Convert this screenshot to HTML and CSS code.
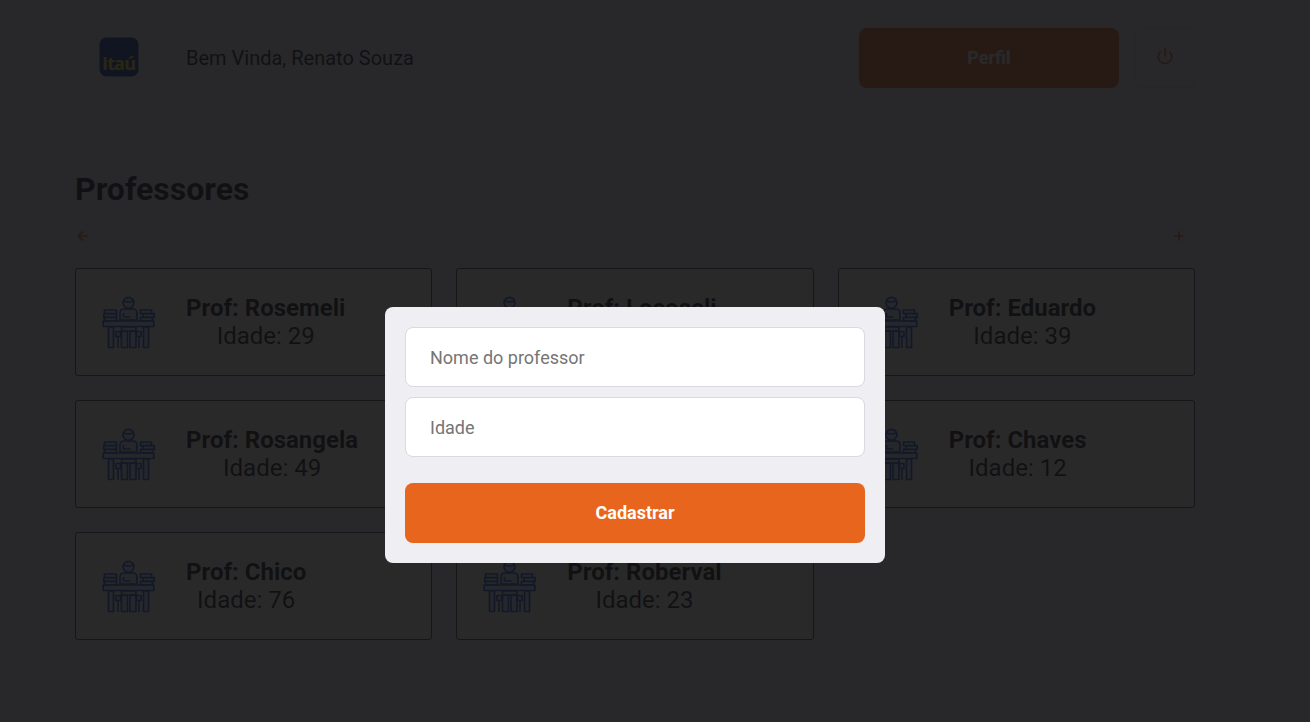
FILE: index.html
```html
<!DOCTYPE html>
<html lang="pt-BR">
<head>
<meta charset="utf-8">
<title>Professores</title>
<link rel="stylesheet" href="styles.css">
</head>
<body>
<svg class="sprite" aria-hidden="true">
  <symbol id="teacher" viewBox="0 0 54 54">
    <g fill="#9db8f5" fill-opacity=".3" stroke="#1c57e0" stroke-width="1.7" stroke-linejoin="round">
      <path d="M18 24V17q0-4 4-4h9q4 0 4 4v7z"/>
      <path d="M19.500 31h14.500v4H19.500z"/>
      <circle cx="26.500" cy="6.800" r="5.500"/>
      <path d="M21.500 5q5 2 10 0M21.500 17v4h7" fill="none"/>
      <path d="M2.500 14h12v3.700h-12zM1.800 17.700h12.700v3.700H1.800zM2.500 21.400h12V25h-12zM38.500 14h11v3.700h-11zM41 17.700h11.300v3.700H41zM38.500 21.400h12V25h-12z"/>
      <path d="M1.200 25h50.600v5.500H1.200z"/>
      <path d="M6.500 31h5v20.500h-5zM41.500 31h5v20.500h-5z"/>
      <path d="M14 35.500h4.500v5H14zM34.500 35.500H39v5h-4.500z"/>
      <path d="M19.500 51.500V37q0-2 3-2t3 2v14.500zM28 51.500V37q0-2 3-2t3 2v14.500z"/>
      <path d="M16 41v11M37 41v11" fill="none"/>
    </g>
  </symbol>
</svg>
<main class="page">
  <header class="header">
    <svg class="logo" viewBox="0 0 40 40"><rect x=".5" y=".5" width="39" height="39" rx="7" fill="#003a9c"/><text class="logo-text" x="20" y="32.500" text-anchor="middle" textLength="34">Itaú</text></svg>
    <span class="welcome">Bem Vinda, Renato Souza</span>
    <button class="button profile">Perfil</button>
    <button class="logout" aria-label="Sair"><svg width="18" height="18" viewBox="0 0 24 24" fill="none" stroke="#e8651d" stroke-width="2.200" stroke-linecap="round"><path d="M18.360 6.640a9 9 0 1 1-12.730 0M12 2v10"/></svg></button>
  </header>
  <h1 class="title">Professores</h1>
  <nav class="actions">
    <svg width="16" height="16" viewBox="0 0 24 24" fill="none" stroke="#e8651d" stroke-width="2.500"><path d="M20 12H5M12 19l-7-7 7-7"/></svg>
    <svg width="16" height="16" viewBox="0 0 24 24" fill="none" stroke="#e8651d" stroke-width="2.500"><path d="M12 5v14M5 12h14"/></svg>
  </nav>
  <ul class="cards">
    <li class="card"><svg class="avatar"><use href="#teacher"/></svg><div class="info"><strong>Prof: Rosemeli</strong><span>Idade: 29</span></div></li>
    <li class="card"><svg class="avatar"><use href="#teacher"/></svg><div class="info"><strong>Prof: Locoseli</strong><span>Idade: 35</span></div></li>
    <li class="card"><svg class="avatar"><use href="#teacher"/></svg><div class="info"><strong>Prof: Eduardo</strong><span>Idade: 39</span></div></li>
    <li class="card"><svg class="avatar"><use href="#teacher"/></svg><div class="info"><strong>Prof: Rosangela</strong><span>Idade: 49</span></div></li>
    <li class="card"></li>
    <li class="card"><svg class="avatar"><use href="#teacher"/></svg><div class="info"><strong>Prof: Chaves</strong><span>Idade: 12</span></div></li>
    <li class="card"><svg class="avatar"><use href="#teacher"/></svg><div class="info"><strong>Prof: Chico</strong><span>Idade: 76</span></div></li>
    <li class="card"><svg class="avatar"><use href="#teacher"/></svg><div class="info"><strong>Prof: Roberval</strong><span>Idade: 23</span></div></li>
  </ul>
</main>
<div class="overlay">
  <form class="modal">
    <input class="field" placeholder="Nome do professor">
    <input class="field" placeholder="Idade">
    <button class="button submit" type="button">Cadastrar</button>
  </form>
</div>
</body>
</html>
```
FILE: styles.css
```css
* { box-sizing: border-box; margin: 0; padding: 0; }
body { background: #f0f0f5; color: #13130a; font-family: Roboto, sans-serif; height: 722px; overflow: hidden; }
.sprite { display: none; }
.page { width: 1120px; margin-left: 75px; padding-top: 28px; }
.header { display: flex; align-items: center; height: 60px; }
.logo { width: 40px; height: 40px; margin: 0 0 2px 24px; }
.logo-text { font: 700 18px "Open Sans", sans-serif; fill: #ffe600; }
.welcome { margin-left: 47px; font-size: 20px; }
.button { height: 60px; padding-bottom: 2px; border: 0; border-radius: 8px; background: #e8651d; color: #fff; font: 700 18px Roboto, sans-serif; }
.profile { width: 260px; margin-left: auto; }
.logout { display: flex; align-items: center; justify-content: center; width: 60px; height: 60px; margin-left: 16px; padding-bottom: 4px; border: 1px solid #dcdce6; border-radius: 4px; background: transparent; }
.title { margin-top: 82px; font-size: 32px; line-height: 38px; }
.actions { display: flex; justify-content: space-between; height: 16px; margin-top: 20px; padding-right: 8px; }
.cards { display: grid; grid-template-columns: repeat(3, 1fr); gap: 24px; margin-top: 24px; list-style: none; }
.card { display: flex; align-items: center; height: 108px; padding-left: 26px; border: 1px solid #444; border-radius: 3px; background: #fffff0; }
.avatar { width: 54px; height: 54px; margin-top: 2px; }
.info { display: flex; flex-direction: column; align-items: center; margin-left: 30px; font-size: 24px; line-height: 28px; }
.overlay { position: fixed; inset: 0; background: rgba(18, 18, 20, .9); }
.modal { position: absolute; left: 385px; top: 307px; display: flex; flex-direction: column; gap: 10px; width: 500px; height: 256px; padding: 20px; border-radius: 8px; background: #efeef3; }
.field { height: 60px; padding: 0 24px; border: 1px solid #d9d8e3; border-radius: 8px; color: #333; font: 400 18px Roboto, sans-serif; }
.field::placeholder { color: #757575; }
.submit { margin-top: 16px; }
```
